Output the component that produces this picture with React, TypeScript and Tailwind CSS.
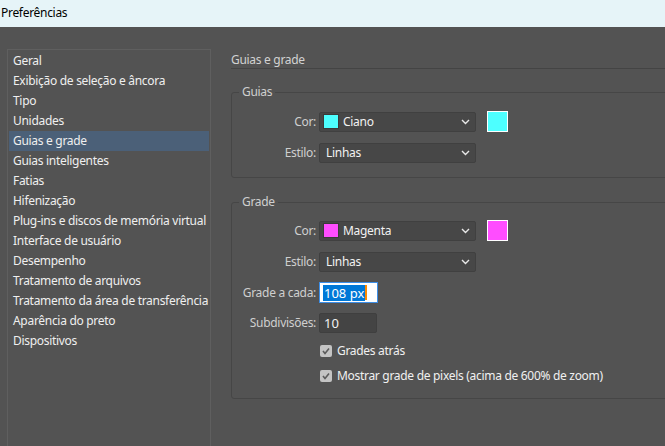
import React from "react";

const menuItems = [
  "Geral",
  "Exibição de seleção e âncora",
  "Tipo",
  "Unidades",
  "Guias e grade",
  "Guias inteligentes",
  "Fatias",
  "Hifenização",
  "Plug-ins e discos de memória virtual",
  "Interface de usuário",
  "Desempenho",
  "Tratamento de arquivos",
  "Tratamento da área de transferência",
  "Aparência do preto",
  "Dispositivos",
];

function Chevron() {
  return (
    <svg width="9" height="6" viewBox="0 0 9 6" className="ml-auto mr-[5px]">
      <polyline points="1,1 4.5,4.5 8,1" fill="none" stroke="#e8e8e8" strokeWidth="1.4" />
    </svg>
  );
}

function ColorSelect({ color, label }: { color: string; label: string }) {
  return (
    <div className="flex items-center">
      <div className="flex h-[20px] w-[157px] items-center rounded-[2px] border border-[#404040] bg-[#474747] pl-[3px]">
        <span className="h-[15px] w-[16px] border border-[#3a3a3a]" style={{ background: color }} />
        <span className="ml-[4px] text-[#f2f2f2]">{label}</span>
        <Chevron />
      </div>
      <span className="ml-[11px] h-[21px] w-[21px] border border-white" style={{ background: color }} />
    </div>
  );
}

function PlainSelect({ label }: { label: string }) {
  return (
    <div className="flex h-[20px] w-[157px] items-center rounded-[2px] border border-[#404040] bg-[#474747] pl-[6px]">
      <span className="text-[#f2f2f2]">{label}</span>
      <Chevron />
    </div>
  );
}

function Row({ label, children, className }: { label: string; children: React.ReactNode; className?: string }) {
  return (
    <div className={"flex items-center " + (className ?? "")}>
      <span className="w-[84px] text-right text-[#cfcfcf]">{label}</span>
      <div className="ml-[3px]">{children}</div>
    </div>
  );
}

function Check({ label, className }: { label: string; className?: string }) {
  return (
    <div className={"ml-[88px] flex h-[20px] items-center " + (className ?? "")}>
      <span className="flex h-[12px] w-[12px] items-center justify-center rounded-[2px] bg-[#c4c4c4]">
        <svg width="10" height="10" viewBox="0 0 10 10">
          <polyline points="2,5 4,7.5 8,2.5" fill="none" stroke="#5c5c5c" strokeWidth="1.6" />
        </svg>
      </span>
      <span className="ml-[5px] text-[#f0f0f0]">{label}</span>
    </div>
  );
}

export default function App() {
  return (
    <div
      className="h-[446px] w-[665px] overflow-hidden bg-[#535353] text-[12px] leading-4 tracking-[-0.3px]"
      style={{ fontFamily: '"Noto Sans", "Liberation Sans", sans-serif' }}
    >
      <div className="flex h-[27px] items-center bg-[#e6f4f8] pb-[1px] pl-[1px] text-black">Preferências</div>
      <div className="flex pt-[22px]">
        <div className="ml-[7px] h-[420px] w-[204px] shrink-0 border border-[#5f5f5f] px-[1px] pt-[1px]">
          {menuItems.map((item) => (
            <div
              key={item}
              className={
                "flex h-[20px] items-center whitespace-nowrap pl-[4px] text-[#efefef] " +
                (item === "Guias e grade" ? "bg-[#4b6078]" : "")
              }
            >
              {item}
            </div>
          ))}
        </div>
        <div className="ml-[20px] w-[470px] shrink-0">
          <div className="border-b border-[#444444] pt-[3px] text-[#d2d2d2]">Guias e grade</div>
          <fieldset className="mt-[15px] rounded-[3px] border border-[#464646] pb-[14px] pt-[11px]">
            <legend className="ml-[7px] px-[3px] text-[#cfcfcf]">Guias</legend>
            <Row label="Cor:">
              <ColorSelect color="#4dffff" label="Ciano" />
            </Row>
            <Row label="Estilo:" className="mt-[11px]">
              <PlainSelect label="Linhas" />
            </Row>
          </fieldset>
          <fieldset className="mt-[16px] rounded-[3px] border border-[#464646] pb-[12px] pt-[10px]">
            <legend className="ml-[7px] px-[3px] text-[#cfcfcf]">Grade</legend>
            <Row label="Cor:">
              <ColorSelect color="#ff4dff" label="Magenta" />
            </Row>
            <Row label="Estilo:" className="mt-[11px]">
              <PlainSelect label="Linhas" />
            </Row>
            <Row label="Grade a cada:" className="mt-[10px]">
              <div className="flex h-[21px] w-[59px] items-center border border-[#3d8ee6] bg-white pl-[3px]">
                <span className="bg-[#0078d7] px-[1px] text-[13px] tracking-normal text-white">108 px</span>
                <span className="h-[15px] w-[2px] bg-[#ff8a00]" />
              </div>
            </Row>
            <Row label="Subdivisões:" className="mt-[10px]">
              <div className="flex h-[20px] w-[58px] items-center rounded-[2px] border border-[#3f3f3f] bg-[#444444] pl-[4px] text-[13px] tracking-normal text-[#f2f2f2]">
                10
              </div>
            </Row>
            <Check label="Grades atrás" className="mt-[8px]" />
            <Check label="Mostrar grade de pixels (acima de 600% de zoom)" className="mt-[5px]" />
          </fieldset>
        </div>
      </div>
    </div>
  );
}
